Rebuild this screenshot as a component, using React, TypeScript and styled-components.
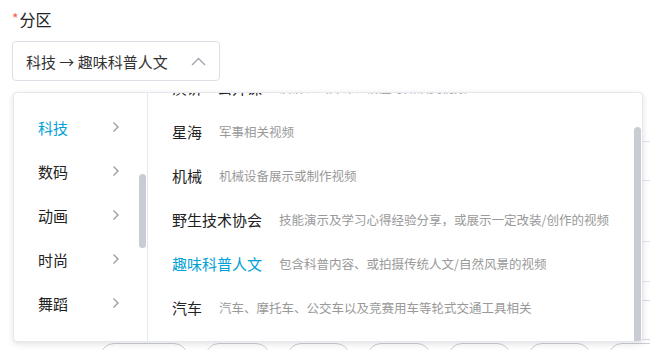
import React, { useLayoutEffect, useRef } from "react";
import styled, { createGlobalStyle } from "styled-components";

const Global = createGlobalStyle`
  html, body { margin: 0; padding: 0; background: #fff; overflow: hidden; }
  body { font-family: "Noto Sans CJK SC", "Noto Sans", sans-serif; color: #222; }
  * { box-sizing: border-box; }
`;

const Page = styled.div`
  width: 650px;
  height: 350px;
  padding: 8px 0 0 12px;
  overflow: hidden;
`;

const Label = styled.div`
  font-size: 16px;
  line-height: 22px;
  height: 22px;
  color: #222;
  display: flex;
  align-items: flex-start;
`;

const Required = styled.span`
  color: #f25d59;
  font-size: 14px;
  line-height: 14px;
  margin: 3px 1px 0 0;
`;

const SelectWrap = styled.div`
  position: relative;
  width: 208px;
  margin-top: 11px;
  z-index: 2;
`;

const SelectBox = styled.div`
  height: 40px;
  border: 1px solid #dcdfe6;
  border-radius: 4px;
  display: flex;
  align-items: center;
  justify-content: space-between;
  padding: 0 13px 0 13px;
  font-size: 15px;
  color: #333;
`;

const Dropdown = styled.div`
  position: absolute;
  left: 1px;
  top: calc(100% + 11px);
  width: 630px;
  height: 250px;
  background: #fff;
  border: 1px solid #e5e9ef;
  border-radius: 4px;
  box-shadow: 0 2px 6px rgba(0, 0, 0, 0.12);
  display: flex;
  overflow: hidden;
`;

const Pane = styled.div<{ $width?: number; $divider?: boolean; $trackGap?: number }>`
  height: 100%;
  display: flex;
  padding-right: ${(p) => p.$trackGap ?? 0}px;
  ${(p) => (p.$width ? `width: ${p.$width}px; flex: none;` : "flex: 1; min-width: 0;")}
  ${(p) => (p.$divider ? "border-right: 1px solid #e5e9ef;" : "")}
`;

const Scroller = styled.div`
  flex: 1;
  min-width: 0;
  height: 100%;
  overflow-y: scroll;
  scrollbar-width: none;
  &::-webkit-scrollbar { display: none; }
`;

const Track = styled.div`
  width: 7px;
  flex: none;
  height: 100%;
  display: flex;
  flex-direction: column;
`;

const Thumb = styled.div<{ $top: number; $height: number }>`
  margin-top: ${(p) => p.$top}px;
  height: ${(p) => p.$height}px;
  flex: none;
  background: #c9ccd3;
  border-radius: 4px;
`;

const LeftList = styled.div`
  padding: 12px 0 12px;
`;

const RightList = styled.div`
  padding: 15px 0 12px;
`;

const LeftItem = styled.div<{ $active?: boolean }>`
  height: 44px;
  display: flex;
  align-items: center;
  justify-content: space-between;
  padding: 0 19px 0 24px;
  font-size: 15px;
  color: ${(p) => (p.$active ? "#00a1d6" : "#222")};
`;

const RightItem = styled.div`
  height: 44px;
  display: flex;
  align-items: center;
  padding-left: 24px;
  white-space: nowrap;
`;

const Title = styled.span<{ $active?: boolean }>`
  font-size: 15px;
  color: ${(p) => (p.$active ? "#00a1d6" : "#222")};
  margin-right: 17px;
`;

const Desc = styled.span`
  font-size: 12.5px;
  color: #999;
`;

const Backdrop = styled.div`
  display: flex;
  flex-direction: column;
`;

const SideFields = styled.div`
  margin-left: 600px;
  width: 200px;
  display: flex;
  flex-direction: column;
`;

const SideInput = styled.div<{ $gap: number; $h: number }>`
  margin-top: ${(p) => p.$gap}px;
  height: ${(p) => p.$h}px;
  border: 1px solid #e0e3e8;
  border-radius: 4px;
`;

const SideRound = styled.div`
  margin-top: 18px;
  height: 40px;
  border: 1px solid #d5d8de;
  border-radius: 20px;
  margin-left: 10px;
`;

const PillRow = styled.div`
  display: flex;
  gap: 17px;
  margin-top: 3px;
  padding-left: 88px;
`;

const Pill = styled.div<{ $w: number }>`
  width: ${(p) => p.$w}px;
  height: 28px;
  flex: none;
  border: 1px solid #ccd0d7;
  border-radius: 14px;
`;

const Chevron = () => (
  <svg width="8" height="12" viewBox="0 0 8 12" fill="none">
    <polyline points="1.5,1.5 6,6 1.5,10.5" stroke="#9a9a9a" strokeWidth="1.3" />
  </svg>
);

const ArrowUp = () => (
  <svg width="15" height="9" viewBox="0 0 15 9" fill="none">
    <polyline points="1,8 7.5,1.5 14,8" stroke="#a0a4aa" strokeWidth="1.4" />
  </svg>
);

const leftItems = ["科技", "数码", "动画", "时尚", "舞蹈"];

const rightItems: [string, string][] = [
  ["演讲·公开课", "演讲、公开课、讲座等知识类视频"],
  ["星海", "军事相关视频"],
  ["机械", "机械设备展示或制作视频"],
  ["野生技术协会", "技能演示及学习心得经验分享，或展示一定改装/创作的视频"],
  ["趣味科普人文", "包含科普内容、或拍摄传统人文/自然风景的视频"],
  ["汽车", "汽车、摩托车、公交车以及竞赛用车等轮式交通工具相关"],
];

export default function App() {
  const rightRef = useRef<HTMLDivElement>(null);

  useLayoutEffect(() => {
    if (rightRef.current) rightRef.current.scrollTop = rightRef.current.scrollHeight;
  }, []);

  return (
    <Page>
      <Global />
      <Label>
        <Required>*</Required>分区
      </Label>
      <SelectWrap>
        <SelectBox>
          <span>科技 → 趣味科普人文</span>
          <ArrowUp />
        </SelectBox>
        <Dropdown>
          <Pane $width={134} $divider $trackGap={1}>
            <Scroller>
              <LeftList>
                {leftItems.map((name) => (
                  <LeftItem key={name} $active={name === "科技"}>
                    <span>{name}</span>
                    <Chevron />
                  </LeftItem>
                ))}
              </LeftList>
            </Scroller>
            <Track>
              <Thumb $top={81} $height={74} />
            </Track>
          </Pane>
          <Pane $trackGap={1}>
            <Scroller ref={rightRef}>
              <RightList>
                {rightItems.map(([t, d]) => (
                  <RightItem key={t}>
                    <Title $active={t === "趣味科普人文"}>{t}</Title>
                    <Desc>{d}</Desc>
                  </RightItem>
                ))}
              </RightList>
            </Scroller>
            <Track>
              <Thumb $top={34} $height={220} />
            </Track>
          </Pane>
        </Dropdown>
      </SelectWrap>
      <Backdrop>
        <SideFields>
          <SideInput $gap={60} $h={40} />
          <SideInput $gap={60} $h={41} />
          <SideRound />
        </SideFields>
        <PillRow>
          {[88, 65, 63, 64, 63, 63, 63].map((w, i) => (
            <Pill key={i} $w={w} />
          ))}
        </PillRow>
      </Backdrop>
    </Page>
  );
}
